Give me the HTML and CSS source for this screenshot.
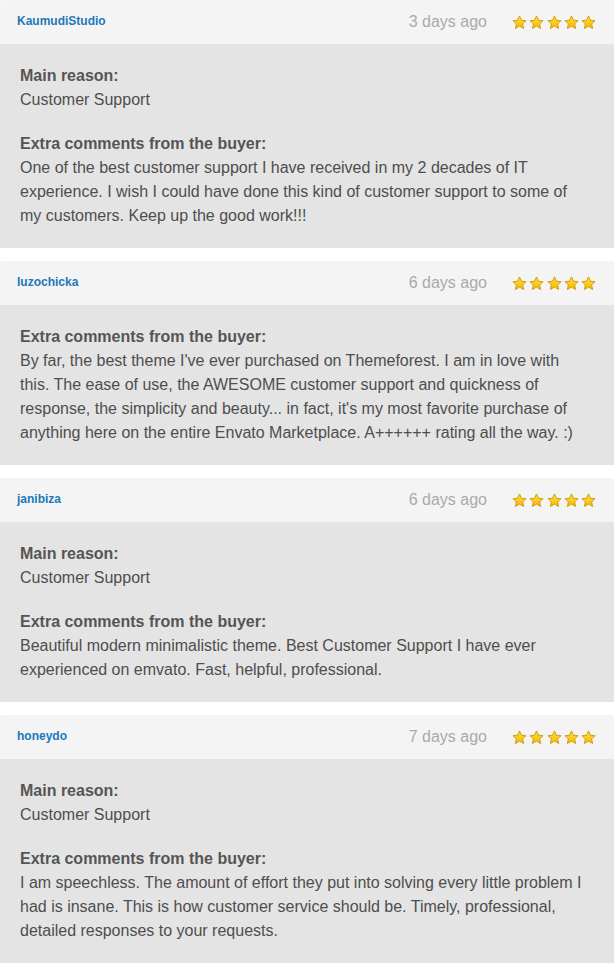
FILE: index.html
```html
<!DOCTYPE html>
<html>
<head>
<meta charset="utf-8">
<link rel="stylesheet" href="styles.css">
</head>
<body>
<svg width="0" height="0" class="defs">
  <defs>
    <linearGradient id="sg" x1="0" y1="0" x2="0" y2="1">
      <stop offset="0" stop-color="#ffe04a"/>
      <stop offset="1" stop-color="#f5b800"/>
    </linearGradient>
    <symbol id="star" viewBox="0 0 16 16">
      <polygon points="8,1 10.1,5.6 15,6.1 11.3,9.4 12.4,14.4 8,11.8 3.6,14.4 4.7,9.4 1,6.1 5.9,5.6" fill="url(#sg)" stroke="#d09a00" stroke-width="1" stroke-linejoin="round"/>
    </symbol>
  </defs>
</svg>
<div class="reviews">
  <div class="review">
    <div class="review-head">
      <a class="author">KaumudiStudio</a>
      <span class="date">3 days ago</span>
      <span class="stars">
        <svg class="star"><use href="#star"/></svg><svg class="star"><use href="#star"/></svg><svg class="star"><use href="#star"/></svg><svg class="star"><use href="#star"/></svg><svg class="star"><use href="#star"/></svg>
      </span>
    </div>
    <div class="review-body">
      <div class="section">
        <div class="label">Main reason:</div>
        <div class="text">Customer Support</div>
      </div>
      <div class="section">
        <div class="label">Extra comments from the buyer:</div>
        <div class="text">One of the best customer support I have received in my 2 decades of IT experience. I wish I could have done this kind of customer support to some of my customers. Keep up the good work!!!</div>
      </div>
    </div>
  </div>

  <div class="review">
    <div class="review-head">
      <a class="author">luzochicka</a>
      <span class="date">6 days ago</span>
      <span class="stars">
        <svg class="star"><use href="#star"/></svg><svg class="star"><use href="#star"/></svg><svg class="star"><use href="#star"/></svg><svg class="star"><use href="#star"/></svg><svg class="star"><use href="#star"/></svg>
      </span>
    </div>
    <div class="review-body">
      <div class="section">
        <div class="label">Extra comments from the buyer:</div>
        <div class="text">By far, the best theme I've ever purchased on Themeforest. I am in love with this. The ease of use, the AWESOME customer support and quickness of response, the simplicity and beauty... in fact, it's my most favorite purchase of anything here on the entire Envato Marketplace. A++++++ rating all the way. :)</div>
      </div>
    </div>
  </div>

  <div class="review">
    <div class="review-head">
      <a class="author">janibiza</a>
      <span class="date">6 days ago</span>
      <span class="stars">
        <svg class="star"><use href="#star"/></svg><svg class="star"><use href="#star"/></svg><svg class="star"><use href="#star"/></svg><svg class="star"><use href="#star"/></svg><svg class="star"><use href="#star"/></svg>
      </span>
    </div>
    <div class="review-body">
      <div class="section">
        <div class="label">Main reason:</div>
        <div class="text">Customer Support</div>
      </div>
      <div class="section">
        <div class="label">Extra comments from the buyer:</div>
        <div class="text">Beautiful modern minimalistic theme. Best Customer Support I have ever experienced on emvato. Fast, helpful, professional.</div>
      </div>
    </div>
  </div>

  <div class="review">
    <div class="review-head">
      <a class="author">honeydo</a>
      <span class="date">7 days ago</span>
      <span class="stars">
        <svg class="star"><use href="#star"/></svg><svg class="star"><use href="#star"/></svg><svg class="star"><use href="#star"/></svg><svg class="star"><use href="#star"/></svg><svg class="star"><use href="#star"/></svg>
      </span>
    </div>
    <div class="review-body">
      <div class="section">
        <div class="label">Main reason:</div>
        <div class="text">Customer Support</div>
      </div>
      <div class="section">
        <div class="label">Extra comments from the buyer:</div>
        <div class="text">I am speechless. The amount of effort they put into solving every little problem I had is insane. This is how customer service should be. Timely, professional, detailed responses to your requests.</div>
      </div>
    </div>
  </div>
</div>
</body>
</html>
```

FILE: styles.css
```css
html, body {
  margin: 0;
  padding: 0;
  background: #ffffff;
}
body {
  font-family: "Liberation Sans", Arial, Helvetica, sans-serif;
  color: #555555;
}
.defs {
  position: absolute;
  width: 0;
  height: 0;
  overflow: hidden;
}
.reviews {
  display: flex;
  flex-direction: column;
  gap: 13px;
}
.review-head {
  height: 44px;
  background: #f4f4f4;
  border-radius: 3px 3px 0 0;
  display: flex;
  align-items: center;
  padding: 0 18px 0 17px;
}
.author {
  font-size: 12px;
  font-weight: bold;
  color: #2178b8;
  flex: 1;
  margin-top: -2px;
}
.date {
  font-size: 16px;
  color: #aaaaaa;
  margin-right: 25px;
}
.stars {
  display: flex;
  gap: 2.25px;
}
.star {
  width: 15px;
  height: 15px;
  display: block;
}
.review-body {
  background: #e4e4e4;
  padding: 20px 24px 20px 20px;
  display: flex;
  flex-direction: column;
  gap: 20px;
  font-size: 16px;
  line-height: 24px;
}
.label {
  font-weight: bold;
  color: #555555;
}
.text {
  color: #4e4e4e;
}
```
